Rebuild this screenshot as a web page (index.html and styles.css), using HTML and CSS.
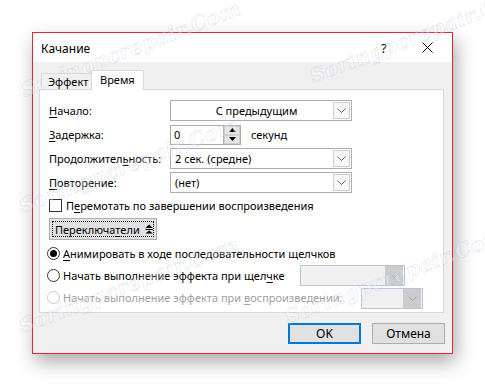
FILE: index.html
```html
<!DOCTYPE html>
<html lang="ru">
<head>
<meta charset="utf-8">
<title>Качание</title>
<link rel="stylesheet" href="styles.css">
</head>
<body>
<div class="stage">
  <div class="dialog">
    <div class="titlebar">
      <span class="title">Качание</span>
      <span class="help">?</span>
      <svg class="close" width="11" height="11" viewBox="0 0 11 11"><path d="M0.5 0.5 L10.5 10.5 M10.5 0.5 L0.5 10.5" stroke="#000" stroke-width="1"/></svg>
    </div>
    <div class="tabs">
      <div class="tab">Эффект</div>
      <div class="tab active">Время</div>
    </div>
    <div class="panel">
      <div class="form">
        <span class="lbl"><u>Н</u>ачало:</span>
        <div class="combo wide"><span class="val center">С предыдущим</span><span class="drop"><svg width="9" height="5" viewBox="0 0 9 5"><path d="M0.5 0.5 L4.5 4.5 L8.5 0.5" fill="none" stroke="#707070"/></svg></span></div>

        <span class="lbl"><u>З</u>адержка:</span>
        <div class="spinrow">
          <div class="spin"><span class="val">0</span><span class="spinbtns"><span class="sb"><svg width="7" height="4" viewBox="0 0 7 4"><path d="M0 4 L3.5 0 L7 4Z" fill="#000"/></svg></span><span class="sb"><svg width="7" height="4" viewBox="0 0 7 4"><path d="M0 0 L3.5 4 L7 0Z" fill="#000"/></svg></span></span></div>
          <span class="unit">секунд</span>
        </div>

        <span class="lbl">Продолжител<u>ь</u>ность:</span>
        <div class="combo wide"><span class="val">2 сек. (средне)</span><span class="drop"><svg width="9" height="5" viewBox="0 0 9 5"><path d="M0.5 0.5 L4.5 4.5 L8.5 0.5" fill="none" stroke="#707070"/></svg></span></div>

        <span class="lbl"><u>П</u>овторение:</span>
        <div class="combo wide"><span class="val">(нет)</span><span class="drop"><svg width="9" height="5" viewBox="0 0 9 5"><path d="M0.5 0.5 L4.5 4.5 L8.5 0.5" fill="none" stroke="#707070"/></svg></span></div>
      </div>

      <div class="check-row">
        <span class="checkbox"></span>
        <span>П<u>е</u>ремотать по завершении воспроизведения</span>
      </div>

      <div class="toggle-row">
        <div class="toggle"><span class="focus"><span>Переключа<u>т</u>ели</span><svg class="tri" width="9" height="10" viewBox="0 0 9 10"><path d="M0.5 4 L4.5 0 L8.5 4Z M0.5 5 H8.5 V6 H0.5Z M0.5 10 L4.5 6.5 L8.5 10Z" fill="#000"/></svg></span></div>
      </div>

      <div class="radio-row first">
        <span class="radio"><span class="dot"></span></span>
        <span><u>А</u>нимировать в ходе последовательности щелчков</span>
      </div>
      <div class="radio-row">
        <span class="radio"></span>
        <span class="rtext w1">Начать выполнение эффекта при щел<u>ч</u>ке</span>
        <div class="combo dis c1"><span class="val"></span><span class="drop"><svg width="9" height="5" viewBox="0 0 9 5"><path d="M0.5 0.5 L4.5 4.5 L8.5 0.5" fill="none" stroke="#a8a8a8"/></svg></span></div>
      </div>
      <div class="radio-row disabled">
        <span class="radio"></span>
        <span class="rtext w2">Начать выполнение эффекта при <u>в</u>оспроизведении:</span>
        <div class="combo dis c2"><span class="val"></span><span class="drop"><svg width="9" height="5" viewBox="0 0 9 5"><path d="M0.5 0.5 L4.5 4.5 L8.5 0.5" fill="none" stroke="#a8a8a8"/></svg></span></div>
      </div>
    </div>
    <div class="buttons">
      <div class="btn default">OK</div>
      <div class="btn">Отмена</div>
    </div>
  </div>

  <div class="wm wm1">Soringpcrepair.Com</div>
  <div class="wm wm2">Soringpcrepair.Com</div>
  <div class="wm wm3">Soringpcrepair.Com</div>
  <div class="wm wm4">Soringpcrepair.Com</div>
  <div class="wm wm5">Soringpcrepair.Com</div>
</div>
</body>
</html>
```

FILE: styles.css
```css
html, body {
  margin: 0;
  padding: 0;
  background: #ffffff;
}
body {
  width: 485px;
  height: 386px;
  overflow: hidden;
  font-family: "Noto Sans", "Open Sans", sans-serif;
  font-size: 11px;
  color: #000;
}
u { text-decoration: underline; text-underline-offset: 2px; }

.stage {
  position: relative;
  width: 485px;
  height: 386px;
  padding: 32px 0 0 32px;
  box-sizing: border-box;
  overflow: hidden;
}

.dialog {
  width: 421px;
  height: 322px;
  box-sizing: border-box;
  border: 1px solid #e3283e;
  background: #f0f0f0;
  box-shadow: 3px 8px 18px rgba(0,0,0,0.34);
  display: flex;
  flex-direction: column;
}

.titlebar {
  height: 29px;
  background: #fff;
  display: flex;
  align-items: center;
  padding-left: 8px;
  flex: none;
  font-size: 12px;
}
.title { flex: 1; padding-top: 1px; }
.help { width: 41px; font-size: 13px; padding-top: 1px; }
.close { margin-right: 19px; }

.tabs {
  display: flex;
  align-items: flex-end;
  margin: 8px 0 0 8px;
  height: 19px;
  flex: none;
  position: relative;
  z-index: 1;
}
.tab {
  height: 16px;
  line-height: 15px;
  padding: 0 0 0 6px;
  border: 1px solid #d9d9d9;
  border-bottom: none;
  border-right: none;
  background: #f0f0f0;
  box-sizing: border-box;
  width: 50px;
}
.tab.active {
  height: 20px;
  margin-bottom: -1px;
  background: #fff;
  border-right: 1px solid #d9d9d9;
  width: 53px;
  padding-left: 8px;
  line-height: 17px;
}

.panel {
  margin-left: 6px;
  width: 405px;
  height: 224px;
  box-sizing: border-box;
  background: #fff;
  border: 1px solid #d9d9d9;
  padding: 10px 0 0 9px;
  flex: none;
}

.form {
  display: grid;
  grid-template-columns: 121px auto;
  row-gap: 3px;
  align-items: center;
}
.lbl { line-height: 21px; white-space: nowrap; }

.combo {
  height: 21px;
  box-sizing: border-box;
  border: 1px solid #adadad;
  background: #fff;
  display: flex;
  align-items: center;
  padding: 1px;
}
.combo.wide { width: 182px; }
.combo .val { flex: 1; padding-left: 3px; }
.combo .val.center { text-align: center; padding-left: 8px; }
.drop {
  width: 17px;
  height: 17px;
  box-sizing: border-box;
  border: 1px solid #cfcfcf;
  background: #f7f7f7;
  display: flex;
  align-items: center;
  justify-content: center;
}

.spinrow { display: flex; align-items: center; gap: 10px; }
.spin {
  width: 71px;
  height: 20px;
  box-sizing: border-box;
  border: 1px solid #adadad;
  display: flex;
  align-items: center;
}
.spin .val { flex: 1; padding-left: 3px; }
.spinbtns {
  width: 16px;
  height: 18px;
  display: flex;
  flex-direction: column;
  border-left: 1px solid #adadad;
}
.sb {
  flex: 1;
  display: flex;
  align-items: center;
  justify-content: center;
  background: #e6e6e6;
  border: 1px solid #d0d0d0;
  box-sizing: border-box;
}

.check-row {
  display: flex;
  align-items: center;
  gap: 4px;
  height: 18px;
  margin-top: 3px;
}
.checkbox {
  width: 13px;
  height: 13px;
  box-sizing: border-box;
  border: 1px solid #333;
  background: #fff;
}

.toggle-row { margin-top: 4px; display: flex; }
.toggle {
  width: 108px;
  height: 22px;
  box-sizing: border-box;
  border: 1px solid #adadad;
  background: #e1e1e1;
  padding: 2px;
}
.focus {
  display: flex;
  align-items: center;
  height: 100%;
  box-sizing: border-box;
  border: 1px dotted #000;
  padding-left: 2px;
  white-space: nowrap;
}
.tri { margin-left: 5px; }

.radio-row {
  display: flex;
  align-items: center;
  height: 22px;
  margin-left: -2px;
  white-space: nowrap;
}
.radio-row.first { margin-top: 2px; }
.radio {
  width: 13px;
  height: 13px;
  border: 1px solid #333;
  border-radius: 50%;
  box-sizing: border-box;
  margin-right: 3px;
  display: flex;
  align-items: center;
  justify-content: center;
  flex: none;
}
.dot { width: 7px; height: 7px; border-radius: 50%; background: #000; }
.radio-row.disabled { color: #a0a0a0; }
.radio-row.disabled .radio { border-color: #c8c8c8; }
.rtext.w1 { width: 237px; }
.rtext.w2 { width: 298px; }

.combo.dis {
  background: #f0f0f0;
  border-color: #b4c6dc;
  height: 21px;
}
.combo.dis .drop {
  background: #cccccc;
  border-color: #cccccc;
  height: 19px;
  width: 18px;
}
.combo.c1 { width: 105px; }
.combo.c2 { width: 62px; margin-top: 2px; }

.buttons {
  display: flex;
  justify-content: flex-end;
  gap: 11px;
  padding-right: 7px;
  margin-top: 10px;
  font-size: 12px;
}
.btn {
  width: 73px;
  height: 21px;
  box-sizing: border-box;
  border: 1px solid #adadad;
  background: #e1e1e1;
  display: flex;
  align-items: center;
  justify-content: center;
}
.btn.default { border: 2px solid #0078d7; }

.wm {
  position: absolute;
  font-family: "DejaVu Serif", serif;
  font-style: italic;
  font-weight: bold;
  font-size: 20px;
  color: rgba(255,255,255,0.3);
  -webkit-text-stroke: 0.6px rgba(150,165,205,0.3);
  transform-origin: left bottom;
  transform: rotate(-21deg);
  white-space: nowrap;
  pointer-events: none;
  letter-spacing: 0.5px;
}
.wm1 { left: 26px; top: 78px; }
.wm2 { left: 315px; top: 64px; }
.wm3 { left: 24px; top: 194px; }
.wm4 { left: 24px; top: 314px; }
.wm5 { left: 290px; top: 305px; }
```
